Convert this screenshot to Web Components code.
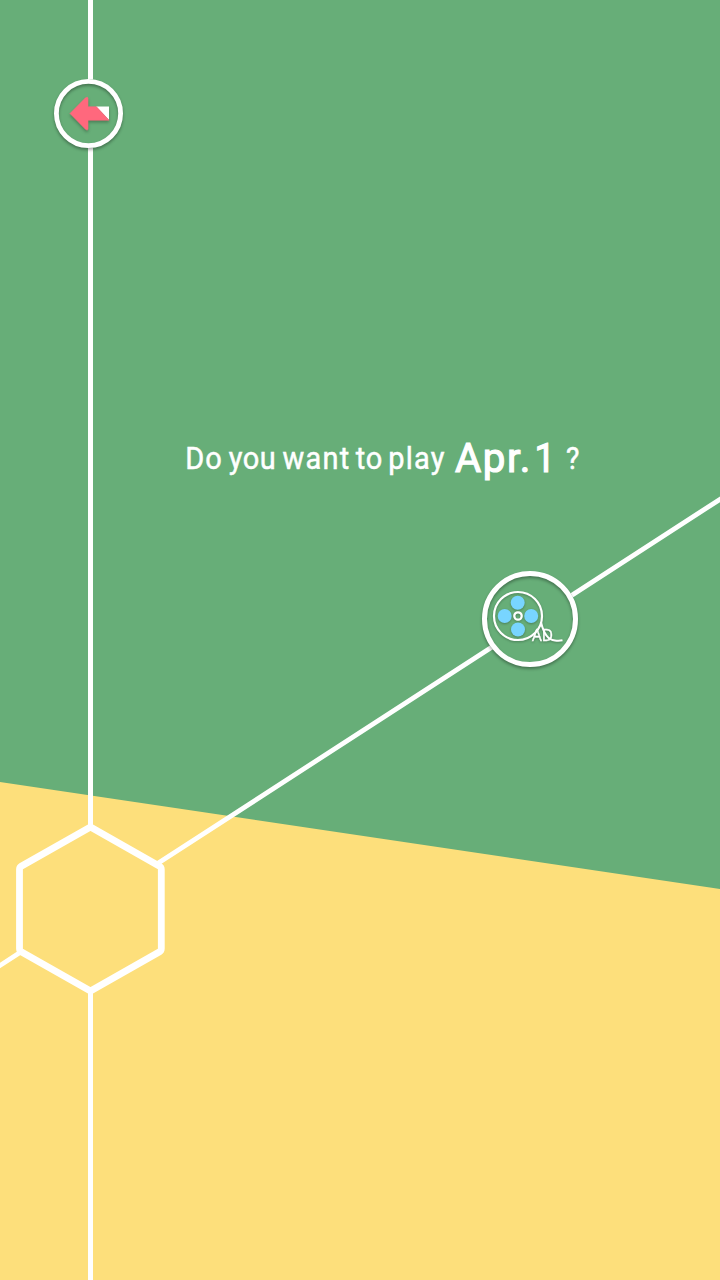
<!DOCTYPE html>
<html lang="en"><head><meta charset="utf-8"><title>Play Apr. 1</title>
<style>html,body{margin:0;width:720px;height:1280px;overflow:hidden;background:#67ae78}body{font-family:Roboto,sans-serif}</style></head>
<body><play-screen><node-button id="back" style="--x:88.5px;--y:113.5px" size="69" stroke="4.8"><back-icon></back-icon></node-button><play-question></play-question><node-button id="ad" style="--x:530px;--y:619px" size="96" stroke="5"><ad-icon></ad-icon></node-button></play-screen><script>
class Base extends HTMLElement{
  connectedCallback(){ if(!this.shadowRoot) this.attachShadow({mode:'open'}).innerHTML=this.view().trim(); }
}
customElements.define('play-screen',class extends Base{view(){return `
<style>:host{display:block;position:relative;width:720px;height:1280px;overflow:hidden}svg{display:block}</style><svg width="720" height="1280" viewBox="0 0 720 1280" fill="none" stroke="#fff">
<path d="M0 0H720V1280H0Z" fill="#67ae78" stroke="none"/>
<path d="M0 782L720 889V1280H0Z" fill="#fddf7b" stroke="none"/>
<path d="M90.5 0V827M90.5 991V1280" stroke-width="5"/>
<path d="M-4 968.1L20 952.5M156 864.6L724 496.7" stroke-width="4.8"/>
<path d="M90.5 827L159.6 866.2Q161.3 867.2 161.3 869.5V948.5Q161.3 950.8 159.6 951.8L90.5 991L21.2 951.8Q19.5 950.8 19.5 948.5V869.5Q19.5 867.2 21.2 866.2Z" stroke-width="6.8" stroke-linejoin="round"/>
</svg><slot></slot>`}});
customElements.define('node-button',class extends Base{view(){
const s=+this.getAttribute('size'),w=+this.getAttribute('stroke');return `
<style>:host{display:block;position:absolute;left:calc(var(--x) - ${s/2}px);top:calc(var(--y) - ${s/2}px);width:${s}px;height:${s}px}
.ring{box-sizing:border-box;width:100%;height:100%;display:grid;place-items:center;background:#67ae78;border-radius:50%}
.outline{position:absolute;inset:0;width:100%;height:100%;overflow:visible;filter:drop-shadow(0 2px 1.5px #0005)}
slot{display:block}</style>
<div class="ring"><svg class="outline" viewBox="0 0 ${s} ${s}"><circle cx="${s/2}" cy="${s/2}" r="${(s-w)/2}" fill="none" stroke="#fff" stroke-width="${w}"/></svg><slot></slot></div>`}});
customElements.define('back-icon',class extends Base{view(){return `
<style>:host{display:block;position:absolute;inset:0}svg{display:block;overflow:visible;filter:drop-shadow(0 2px 1.5px #0004)}</style>
<svg width="69" height="69" viewBox="54 79 69 69"><path d="M96 106.5H109V120Z" fill="#fff"/>
<path d="M70 113.5L85.5 97.8Q88 96.2 88 98.5V106.8H96.5L109 120.2H88V128.5Q88 131 85.5 129.3Z" fill="#ff687d" stroke="#ff687d" stroke-width=".6" stroke-linejoin="round"/></svg>`}});
customElements.define('ad-icon',class extends Base{view(){return `
<style>:host{display:block;position:absolute;inset:0}svg{display:block;overflow:visible;filter:drop-shadow(0 1.5px 1px #0004)}text{font:400 15.5px "Open Sans",sans-serif}</style>
<svg width="96" height="96" viewBox="482 571 96 96" fill="none" stroke="#fff" stroke-width="2.2">
<circle cx="518" cy="616" r="24"/>
<g fill="#78d5ff" stroke="none"><circle cx="517.7" cy="602.8" r="7"/><circle cx="504.7" cy="616" r="7"/><circle cx="531.2" cy="616" r="7"/><circle cx="518" cy="629.5" r="7"/></g>
<circle cx="518" cy="616" r="3.7" stroke-width="2.3"/>
<path d="M541 622C543 631 547 640 555 640.5Q559 641 562.5 640.3" stroke-width="2"/>
<text x="532" y="641" fill="#fff" stroke="#fff" stroke-width=".4" textLength="21" lengthAdjust="spacingAndGlyphs">AD</text></svg>`}});
customElements.define('play-question',class extends Base{view(){
const k=.95,words=[['Do',185.2,36.6],['you',228.7,47],['want',282.5,66.8],['to',355.7,26.5],['play',388.2,56.2]];
return `
<style>:host{display:block;position:absolute;left:180px;top:430px}svg{display:block}text{font:400 30.5px Roboto,sans-serif;fill:#fff;stroke:#fff;stroke-width:.5px}.date{font-size:41px;stroke-width:1.2px}</style>
<svg width="410" height="60" viewBox="180 430 410 60">
${words.map(([t,x,w])=>`<text transform="translate(${x} 469) scale(${k} 1)" textLength="${w/k}">${t}</text>`).join('')}
<text class="date" transform="translate(455 472) scale(.98 1)" textLength="77">Apr.</text><text class="date" transform="translate(534.5 472) scale(.9 1)">1</text><text transform="translate(566 469) scale(.93 1)">?</text></svg>`}});
</script></body></html>
